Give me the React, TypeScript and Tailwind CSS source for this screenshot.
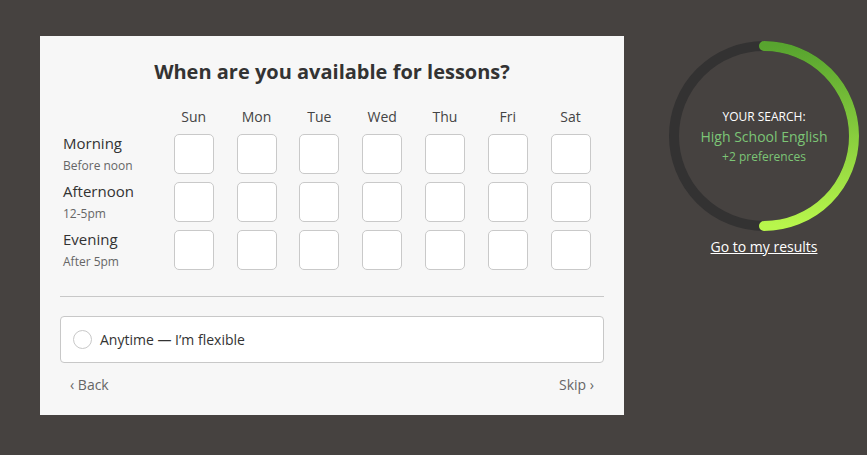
const days = ["Sun", "Mon", "Tue", "Wed", "Thu", "Fri", "Sat"];

const slots = [
  { label: "Morning", hint: "Before noon" },
  { label: "Afternoon", hint: "12-5pm" },
  { label: "Evening", hint: "After 5pm" },
];

function SearchRing() {
  return (
    <svg width="200" height="200" viewBox="0 0 200 200" aria-hidden="true">
      <defs>
        <linearGradient id="ring" x1="0" y1="10" x2="0" y2="190" gradientUnits="userSpaceOnUse">
          <stop offset="0" stopColor="#58a42f" />
          <stop offset="1" stopColor="#b8f64c" />
        </linearGradient>
      </defs>
      <circle cx="100" cy="100" r="90" fill="none" stroke="#333232" strokeWidth="10" />
      <path
        d="M100 10 A90 90 0 0 1 100 190"
        fill="none"
        stroke="url(#ring)"
        strokeWidth="10"
        strokeLinecap="round"
      />
    </svg>
  );
}

export default function App() {
  return (
    <div
      className="flex min-h-[455px] bg-[#464240] pl-10 pt-9"
      style={{ fontFamily: '"Open Sans", "Noto Sans", sans-serif' }}
    >
      <div className="flex h-[379px] w-[584px] flex-col bg-[#f7f7f7] px-5 pt-[22px] pb-5">
        <h1 className="text-center text-[20px] leading-7 font-bold text-[#333]">
          When are you available for lessons?
        </h1>

        <div className="mt-[21px] grid grid-cols-[91px_repeat(7,40px)] gap-x-[22.8px] gap-y-2">
          <div className="h-[19px]" />
          {days.map((day) => (
            <div key={day} className="h-[19px] text-center text-[14px] leading-5 text-[#444]">
              {day}
            </div>
          ))}
          {slots.map((slot) => (
            <div key={slot.label} className="contents">
              <div className="h-10 pl-[3px]">
                <div className="-mt-px text-[15px] leading-5 text-[#333]">{slot.label}</div>
                <div className="mt-1 text-[12px] leading-[18px] whitespace-nowrap text-[#666]">
                  {slot.hint}
                </div>
              </div>
              {days.map((day) => (
                <button
                  key={day}
                  className="h-10 w-10 rounded-[5px] border border-[#c9c9c9] bg-white"
                />
              ))}
            </div>
          ))}
        </div>

        <div className="mt-[26px] h-px bg-[#c8c8c8]" />

        <label className="mt-[19px] flex h-[47px] items-center gap-2 rounded-[4px] border border-[#c8c8c8] bg-white pl-3">
          <span className="h-[19px] w-[19px] rounded-full border border-[#c8c8c8] bg-white" />
          <span className="text-[14px] text-[#333]">Anytime — I’m flexible</span>
        </label>

        <div className="mt-3 flex justify-between px-2.5 text-[14px] leading-5 text-[#666]">
          <span>‹ Back</span>
          <span>Skip ›</span>
        </div>
      </div>

      <div className="ml-10 flex flex-col items-center">
        <div className="relative">
          <SearchRing />
          <div className="absolute inset-0 flex flex-col items-center justify-center pt-0.5">
            <div className="text-[12px] leading-5 text-white">YOUR SEARCH:</div>
            <div className="text-[14px] leading-5 text-[#7cc576]">High School English</div>
            <div className="text-[12px] leading-5 text-[#7cc576]">+2 preferences</div>
          </div>
        </div>
        <a href="#" className="mt-px text-[14px] leading-5 text-white underline">
          Go to my results
        </a>
      </div>
    </div>
  );
}
